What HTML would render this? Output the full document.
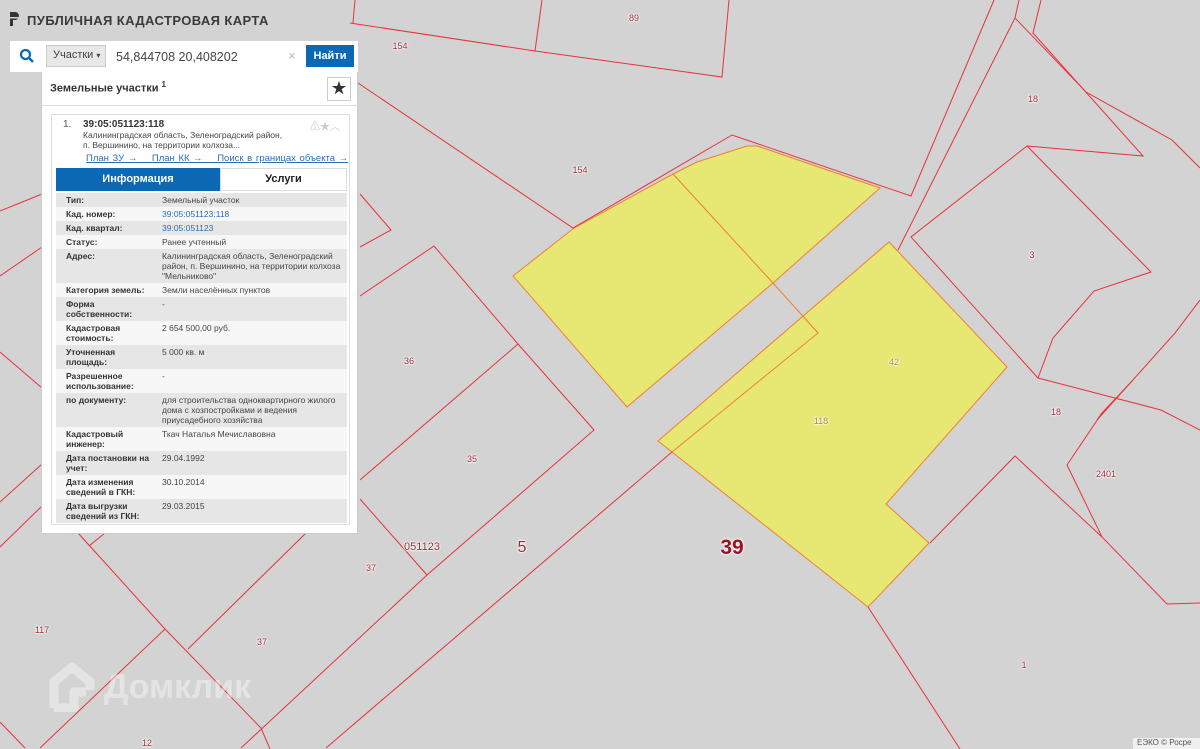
<!DOCTYPE html>
<html><head><meta charset="utf-8"><style>
*{margin:0;padding:0;box-sizing:border-box}
body{width:1200px;height:749px;overflow:hidden;background:#d3d3d3;font-family:"Liberation Sans","Noto Sans CJK SC",sans-serif;position:relative}
svg.map{position:absolute;left:0;top:0}
.lbl{position:absolute;font-size:9px;color:#9a2a34;text-shadow:0 0 2px #fff,0 0 2px #fff,0 0 2px #fff,0 0 1px #fff;transform:translate(-50%,-50%);white-space:nowrap}
.title{position:absolute;left:27px;top:13px;font-size:13px;font-weight:bold;color:#3a3a3a;letter-spacing:0.4px}
.search{position:absolute;left:10px;top:41px;width:348px;height:31px;background:#fff}
.sel{position:absolute;left:36px;top:4px;width:60px;height:22px;background:#e8e8e8;border:1px solid #ccc;font-size:11px;color:#444;padding:3px 0 0 6px}
.inp{position:absolute;left:106px;top:9px;font-size:12.5px;color:#444}
.btn{position:absolute;left:296px;top:4px;width:48px;height:22px;background:#0b68b4;color:#fff;font-size:11px;font-weight:bold;text-align:center;line-height:22px}
.panel{position:absolute;left:41px;top:72px;width:317px;height:462px;background:#fff;border:1px solid #ccc;border-top:none}
.card{position:absolute;left:9px;top:42px;width:299px;height:411px;border:1px solid #ddd}
table{position:absolute;left:4px;top:78px;width:291px;border-collapse:collapse;font-size:8.5px;color:#444}
td{vertical-align:top;padding:2px 0 2px 10px;line-height:10px}
td.k{font-weight:bold;width:96px;color:#333}
tr:nth-child(odd){background:#e6e6e6}
tr:nth-child(even){background:#f7f7f7}
a{color:#2a6fb8;text-decoration:none}
</style></head><body>
<svg class="map" width="1200" height="749" viewBox="0 0 1200 749">
<g fill="#e7e774" stroke="#f08030" stroke-width="1">
<polygon points="513,276 574,228 673,174 697,162 747,146 757,146 880,188 773,283 627,407"/>
<polygon points="658,441 889,242 1007,367 886,504 929,543 868,607 672,452"/>
</g>
<g fill="none" stroke="#f08030" stroke-width="1"><polyline points="673,174 773,283 818,333 672,452"/></g>
<g fill="none" stroke="#e8323c" stroke-width="1">
<polyline points="350,23 535,51 722,77 729,0"/><line x1="535" y1="51" x2="542" y2="0"/><line x1="355" y1="0" x2="353" y2="23"/>
<polyline points="358,83 573,228 732,135 911,196 994,0"/>
<polyline points="898,250 1015,18 1019,0"/>
<polyline points="1015,18 1086,92 1172,140 1200,168"/>
<polyline points="1041,0 1033,33 1143,156 1027,146 911,237 1038,378 1161,410 1200,430"/>
<polyline points="1027,146 1151,272 1094,291 1053,338 1038,378"/>
<polyline points="1200,300 1175,333 1097,420 1102,413"/>
<polyline points="1133,380 1102,413 1067,465 1102,537 1167,604 1200,603"/>
<polyline points="930,543 1015,456 1102,537"/>
<polyline points="868,607 960,749"/>
<polyline points="360,194 391,230 360,247"/>
<polyline points="360,296 434,246 518,344 594,430 427,575 241,748"/>
<polyline points="518,344 360,480"/><polyline points="360,499 427,575"/>
<polyline points="672,452 326,748"/>
<line x1="0" y1="211" x2="42" y2="194"/><line x1="0" y1="276" x2="42" y2="247"/><line x1="0" y1="352" x2="42" y2="388"/><line x1="0" y1="502" x2="42" y2="464"/><line x1="0" y1="547" x2="42" y2="506"/>
<polyline points="78,533 165,629 261,728 270,749"/><polyline points="165,629 40,748"/>
<polyline points="89,546 105,533"/><polyline points="188,649 306,533"/>
<polyline points="0,722 25,748"/>
</g>
</svg>
<div class="lbl" style="left:634px;top:18px">89</div>
<div class="lbl" style="left:400px;top:46px">154</div>
<div class="lbl" style="left:580px;top:170px">154</div>
<div class="lbl" style="left:1033px;top:99px">18</div>
<div class="lbl" style="left:1032px;top:255px">3</div>
<div class="lbl" style="left:409px;top:361px">36</div>
<div class="lbl" style="left:894px;top:362px;color:#b08a20">42</div>
<div class="lbl" style="left:1056px;top:412px">18</div>
<div class="lbl" style="left:821px;top:421px;color:#b08a20">118</div>
<div class="lbl" style="left:472px;top:459px">35</div>
<div class="lbl" style="left:1106px;top:474px">2401</div>
<div class="lbl" style="left:422px;top:547px;font-size:11px">051123</div>
<div class="lbl" style="left:522px;top:548px;font-size:16px">5</div>
<div class="lbl" style="left:732px;top:548px;font-size:21px;font-weight:bold;color:#a01020">39</div>
<div class="lbl" style="left:371px;top:568px">37</div>
<div class="lbl" style="left:42px;top:630px">117</div>
<div class="lbl" style="left:262px;top:642px">37</div>
<div class="lbl" style="left:1024px;top:665px">1</div>
<div class="lbl" style="left:147px;top:743px">12</div>
<svg style="position:absolute;left:48px;top:662px" width="50" height="50"><path d="M6 46V20L24 5L42 20V28M6 46H26V30H38" fill="none" stroke="rgba(255,255,255,0.38)" stroke-width="9" stroke-linejoin="round"/></svg>
<div style="position:absolute;left:104px;top:668px;font-size:34px;font-weight:bold;color:rgba(255,255,255,0.4)">Домклик</div>
<div style="position:absolute;left:1133px;top:738px;width:67px;height:11px;background:#f0f0f0;font-size:8px;color:#555;padding-left:4px">ЕЭКО © Росре</div>
<svg style="position:absolute;left:9px;top:11px" width="10" height="16"><path d="M1 1h5a4 4 0 0 1 0 8H4v6H1z" fill="#333"/><rect x="0" y="6" width="10" height="1.5" fill="#d3d3d3"/></svg>
<div class="title">ПУБЛИЧНАЯ КАДАСТРОВАЯ КАРТА</div>
<div class="search">
<svg style="position:absolute;left:9px;top:7px" width="16" height="16"><circle cx="6.5" cy="6.5" r="4.5" fill="none" stroke="#0b68b4" stroke-width="2.2"/><line x1="10" y1="10" x2="14" y2="14" stroke="#0b68b4" stroke-width="2.5"/></svg>
<div class="sel">Участки <span style="font-size:8px">▾</span></div>
<div class="inp">54,844708 20,408202</div>
<div style="position:absolute;left:278px;top:7px;color:#bbb;font-size:13px">×</div>
<div class="btn">Найти</div>
</div>
<div class="panel">
<div style="position:absolute;left:8px;top:8px;font-size:11px;font-weight:bold;color:#333">Земельные участки <sup style="font-size:8px">1</sup></div>
<div style="position:absolute;left:285px;top:5px;width:24px;height:24px;border:1px solid #ccc;text-align:center;font-size:15px;line-height:22px;color:#333">★</div>
<div style="position:absolute;left:0;top:33px;width:316px;height:1px;background:#ddd"></div>
<div class="card">
<div style="position:absolute;left:11px;top:4px;font-size:10px;color:#555">1.</div>
<div style="position:absolute;left:31px;top:4px;font-size:10px;font-weight:bold;color:#333">39:05:051123:118</div>
<div style="position:absolute;left:31px;top:15px;font-size:8.5px;color:#444;line-height:10px">Калининградская область, Зеленоградский район,<br>п. Вершинино, на территории колхоза...</div>
<div style="position:absolute;left:258px;top:3px;font-size:10px;color:#ccc">⚠★︿</div>
<div style="position:absolute;left:34px;top:38px;font-size:9.5px;color:#2a6fb8;text-decoration:underline;word-spacing:1px">План ЗУ →&nbsp;&nbsp;&nbsp; План КК →&nbsp;&nbsp;&nbsp; Поиск в границах объекта →</div>
<div style="position:absolute;left:4px;top:53px;width:164px;height:23px;background:#0b68b4;color:#fff;font-size:11px;font-weight:bold;text-align:center;line-height:23px">Информация</div>
<div style="position:absolute;left:168px;top:53px;width:127px;height:23px;border:1px solid #ddd;color:#222;font-size:11px;font-weight:bold;text-align:center;line-height:21px">Услуги</div>
<table>
<tr><td class="k">Тип:</td><td>Земельный участок</td></tr>
<tr><td class="k">Кад. номер:</td><td><a>39:05:051123:118</a></td></tr>
<tr><td class="k">Кад. квартал:</td><td><a>39:05:051123</a></td></tr>
<tr><td class="k">Статус:</td><td>Ранее учтенный</td></tr>
<tr><td class="k">Адрес:</td><td>Калининградская область, Зеленоградский район, п. Вершинино, на территории колхоза "Мельниково"</td></tr>
<tr><td class="k">Категория земель:</td><td>Земли населённых пунктов</td></tr>
<tr><td class="k">Форма собственности:</td><td>-</td></tr>
<tr><td class="k">Кадастровая стоимость:</td><td>2 654 500,00 руб.</td></tr>
<tr><td class="k">Уточненная площадь:</td><td>5 000 кв. м</td></tr>
<tr><td class="k">Разрешенное использование:</td><td>-</td></tr>
<tr><td class="k">по документу:</td><td>для строительства одноквартирного жилого дома с хозпостройками и ведения приусадебного хозяйства</td></tr>
<tr><td class="k">Кадастровый инженер:</td><td>Ткач Наталья Мечиславовна</td></tr>
<tr><td class="k">Дата постановки на учет:</td><td>29.04.1992</td></tr>
<tr><td class="k">Дата изменения сведений в ГКН:</td><td>30.10.2014</td></tr>
<tr><td class="k">Дата выгрузки сведений из ГКН:</td><td>29.03.2015</td></tr>
</table>
</div>
</div>
</body></html>
